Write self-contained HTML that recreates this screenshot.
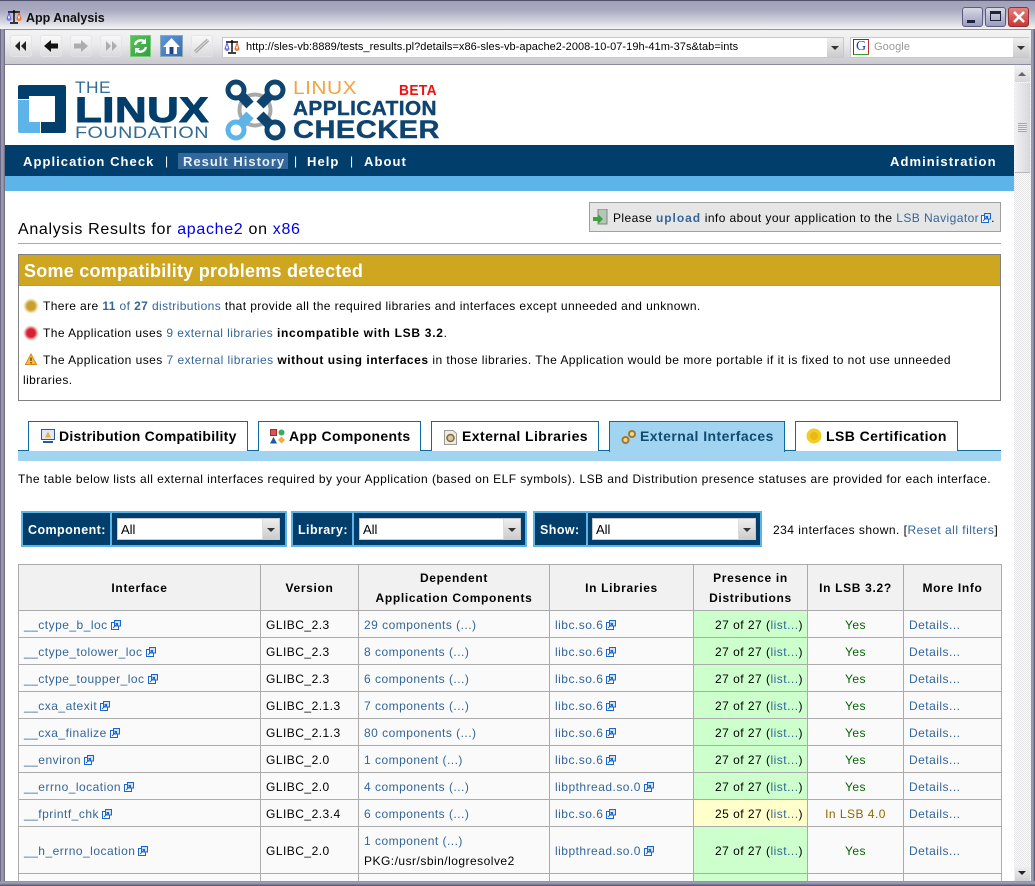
<!DOCTYPE html>
<html><head><meta charset="utf-8"><title>App Analysis</title>
<style>
html,body{margin:0;padding:0;width:1035px;height:886px;overflow:hidden;background:#fff}
body{position:relative;font:12px/16px "Liberation Sans",Arial,sans-serif;color:#000;letter-spacing:.42px}
.a{position:absolute;white-space:nowrap}
a,.l{color:#336699;text-decoration:none}
b{letter-spacing:.65px}
svg{display:block}
.ib{position:absolute;top:35px;width:22px;height:22px;border:1px solid #e4e4e8;border-radius:3px;background:linear-gradient(#fafafa,#dcdcdf);box-sizing:border-box}
.wb{position:absolute;top:7px;height:20px;border-radius:3px;border:1px solid #5c5c80;box-sizing:border-box;background:linear-gradient(#d8d8e4,#9c9cbc)}
.tab{position:absolute;top:421px;height:30px;box-sizing:border-box;border:1px solid #0f6a9f;border-bottom:none;background:#fff;font-weight:bold;font-size:14px;line-height:28px;white-space:nowrap}
.tab span{position:absolute;top:0}
.tab svg{position:absolute;top:7px}
.fb{position:absolute;top:511px;height:36px;box-sizing:border-box;border:2px solid #5cb4e8;background:#013e6b;color:#fff;font-weight:bold;font-size:12.5px;line-height:34px}
.fb .d{position:absolute;top:0;bottom:0;width:2px;background:#5cb4e8}
.sel{position:absolute;top:5px;height:22px;background:#fff;border:1px solid #c8c8cc;box-sizing:border-box;color:#000;font-weight:normal;font-size:13px;line-height:22px;padding-left:3px;letter-spacing:0}
.sel i{position:absolute;right:0;top:0;bottom:0;width:16px;background:linear-gradient(#eee,#ccc);border-left:1px solid #ddd}
.sel i:after{content:"";position:absolute;left:4px;top:9px;border:4px solid transparent;border-top:4px solid #333;border-bottom:0}
.nv{color:#fff;font-weight:bold;font-size:13px;letter-spacing:1.06px;top:154px}
table{position:absolute;left:18px;top:564px;border-collapse:collapse;table-layout:fixed;width:983px;letter-spacing:.48px}
td,th{border:1px solid #ababab;padding:2px 0 0 5px;height:25px;background:#fafafa;font-weight:normal;white-space:nowrap;overflow:hidden;line-height:20px;box-sizing:border-box}
tr{height:27px}
th{background:#f1f1f1;font-weight:bold;text-align:center;padding:0;height:46px;letter-spacing:.68px}
.g{background:#ccffcc}.y{background:#ffffcc}
.p{text-align:right;padding-right:4px}
.c{text-align:center;padding:2px 0 0;color:#006600}
.o{color:#8a6a00}
.x{display:inline-block;width:10px;height:10px;vertical-align:-1px;margin-left:3px}
</style></head><body>
<svg width="0" height="0" style="position:absolute"><defs>
<symbol id="ext" viewBox="0 0 10 10"><rect x=".5" y="2.5" width="7" height="7" fill="#fff" stroke="#1a66cc"/><rect x="3.5" y=".5" width="6" height="5.5" fill="#cfe2fa" stroke="#1a66cc"/><path d="M2 8L6.5 3.5M4.5 3.5H6.5V5.5" stroke="#1a66cc" fill="none"/></symbol>
<symbol id="scale" viewBox="0 0 16 16"><path d="M8 1V13M2 3H14M4 14H12" stroke="#000" stroke-width="1.4"/><path d="M3 4L1 10H5Z" fill="#fff" stroke="#5a5ad8"/><path d="M1 10A2 2 0 0 0 5 10Z" fill="#7a7af0"/><path d="M13 4L11 10H15Z" fill="#fff" stroke="#e06020"/><path d="M11 10A2 2 0 0 0 15 10Z" fill="#f08030"/></symbol>
</defs></svg>

<!-- window chrome -->
<div class="a" style="left:0;top:0;width:1035px;height:29px;background:linear-gradient(#a0a0ba 0,#a8a8c0 30%,#d0d0dc 70%,#f4f4f6 100%);border-top:1px solid #50506a;box-sizing:border-box"></div>
<svg class="a" style="left:6px;top:9px" width="16" height="16"><use href="#scale"/></svg>
<div class="a" style="left:26px;top:10px;font-size:12.5px;font-weight:bold;letter-spacing:0;color:#111">App Analysis</div>
<div class="wb" style="left:962px;width:21px"><div class="a" style="left:4px;top:12px;width:8px;height:3px;background:#1c2440"></div></div>
<div class="wb" style="left:985px;width:21px"><div class="a" style="left:4px;top:3px;width:11px;height:10px;border:1px solid #1c2440;border-top-width:3px;box-sizing:border-box"></div></div>
<div class="wb" style="left:1008px;width:21px;background:linear-gradient(#e88080,#c83838);border-color:#903030"><svg class="a" style="left:3px;top:2px" width="14" height="14"><path d="M2 2L12 12M12 2L2 12" stroke="#fff" stroke-width="2.6"/></svg></div>
<div class="a" style="left:0;top:29px;width:1035px;height:36px;background:linear-gradient(#f3f3f4,#ececee 40%,#c9c9ce);border-top:1px solid #9090a8;border-bottom:1px solid #8a8aa0;box-sizing:border-box"></div>

<div class="ib" style="left:10px"><svg width="20" height="20"><path d="M9 5L4 10L9 15ZM15 5L10 10L15 15Z" fill="#222"/></svg></div>
<div class="ib" style="left:40px"><svg width="20" height="20"><path d="M10 4L3 10L10 16V12.5H17V7.5H10Z" fill="#111"/></svg></div>
<div class="ib" style="left:70px;opacity:.75"><svg width="20" height="20"><path d="M10 4L17 10L10 16V12.5H3V7.5H10Z" fill="#999"/></svg></div>
<div class="ib" style="left:100px;opacity:.75"><svg width="20" height="20"><path d="M5 5L10 10L5 15ZM11 5L16 10L11 15Z" fill="#999"/></svg></div>
<div class="a" style="left:130px;top:35px;width:21px;height:22px;background:linear-gradient(135deg,#58c058,#30a040);border:1px solid #7c7;box-sizing:border-box"><svg width="19" height="20"><path d="M4 9A6 6 0 0 1 14 6M15 11A6 6 0 0 1 5 14" fill="none" stroke="#fff" stroke-width="2.4"/><path d="M15 2V8H10ZM4 18V12H9Z" fill="#fff"/></svg></div>
<div class="a" style="left:160px;top:35px;width:23px;height:22px;background:linear-gradient(135deg,#5e96d8,#3a6cb0);border:1px solid #8ab;box-sizing:border-box"><svg width="21" height="20"><path d="M10.500 2L19 11H16V18H5V11H2Z" fill="#fff"/><rect x="8.500" y="11" width="4" height="7" fill="#1c3f90"/></svg></div>
<div class="ib" style="left:191px;opacity:.8"><svg width="20" height="20"><path d="M3 16L16 4" stroke="#999" stroke-width="3.500"/><path d="M3 16L16 4" stroke="#ddd" stroke-width="1"/></svg></div>

<div class="a" style="left:222px;top:37px;width:622px;height:21px;background:#fff;border:1px solid #c8c8cc;box-sizing:border-box"></div>
<svg class="a" style="left:224px;top:39px" width="16" height="16"><use href="#scale"/></svg>
<div class="a" style="left:246px;top:40px;font-size:11px;line-height:15px;letter-spacing:.05px">http://sles-vb:8889/tests_results.pl?details=x86-sles-vb-apache2-2008-10-07-19h-41m-37s&amp;tab=ints</div>
<div class="a" style="left:827px;top:38px;width:16px;height:19px;background:linear-gradient(#eee,#ccc)"><div class="a" style="left:4px;top:8px;border:4px solid transparent;border-top-color:#333;border-bottom:0"></div></div>
<div class="a" style="left:850px;top:37px;width:179px;height:21px;background:#fff;border:1px solid #c8c8cc;box-sizing:border-box"></div>
<div class="a" style="left:853px;top:39px;width:14px;height:14px;border:1px solid;border-color:#1a3fc0 #c03030 #30a030 #1a3fc0;color:#1a3fc0;font:14px/14px 'Liberation Serif',serif;text-align:center;letter-spacing:0">G</div>
<div class="a" style="left:874px;top:40px;font-size:11px;line-height:15px;color:#999;letter-spacing:.1px">Google</div>
<div class="a" style="left:1013px;top:38px;width:16px;height:19px;background:linear-gradient(#eee,#ccc)"><div class="a" style="left:4px;top:8px;border:4px solid transparent;border-top-color:#333;border-bottom:0"></div></div>

<!-- logos -->
<svg class="a" style="left:5px;top:65px" width="450" height="80" viewBox="5 65 450 80">
<path d="M20 85H64a2 2 0 0 1 2 2V131a2 2 0 0 1-2 2H41V122H55V96H29V99H18V87a2 2 0 0 1 2-2Z" fill="#013e6b"/>
<path d="M18 100H29V122H40V133H20a2 2 0 0 1-2-2Z" fill="#5cb4e8"/>
<text x="75" y="93" font-family="Liberation Sans" font-size="17" fill="#336b94" textLength="36" lengthAdjust="spacingAndGlyphs">THE</text>
<text x="75" y="122" font-family="Liberation Sans" font-weight="bold" font-size="35" fill="#013e6b" stroke="#013e6b" stroke-width="1" textLength="134" lengthAdjust="spacingAndGlyphs">LINUX</text>
<text x="75" y="138" font-family="Liberation Sans" font-size="16.500" fill="#336b94" textLength="134" lengthAdjust="spacingAndGlyphs">FOUNDATION</text>
<circle cx="255" cy="110" r="15.500" fill="none" stroke="#a8a8a8" stroke-width="4"/>
<g fill="none">
<path d="M236 90L250 105" stroke="#0f4470" stroke-width="10"/><circle cx="236" cy="90" r="8" stroke="#0f4470" stroke-width="5" fill="#fff"/>
<path d="M275 90L260 105" stroke="#0f4470" stroke-width="10"/><circle cx="275" cy="90" r="8" stroke="#0f4470" stroke-width="5" fill="#fff"/>
<path d="M236 130L250 115" stroke="#5cb4e8" stroke-width="10"/><circle cx="236" cy="130" r="8" stroke="#5cb4e8" stroke-width="5" fill="#fff"/>
<path d="M275 130L260 115" stroke="#0f4470" stroke-width="10"/><circle cx="275" cy="130" r="8" stroke="#0f4470" stroke-width="5" fill="#fff"/>
</g>
<text x="293" y="94" font-family="Liberation Sans" font-size="18" fill="#f4a340" textLength="64" lengthAdjust="spacingAndGlyphs">LINUX</text>
<text x="399" y="95" font-family="Liberation Sans" font-weight="bold" font-size="15" fill="#ee1111" textLength="38" lengthAdjust="spacingAndGlyphs">BETA</text>
<text x="293" y="115" font-family="Liberation Sans" font-weight="bold" font-size="20" fill="#0f4470" stroke="#0f4470" stroke-width=".4" textLength="144" lengthAdjust="spacingAndGlyphs">APPLICATION</text>
<text x="293" y="138" font-family="Liberation Sans" font-weight="bold" font-size="25" fill="#0f4470" stroke="#0f4470" stroke-width=".4" textLength="147" lengthAdjust="spacingAndGlyphs">CHECKER</text>
</svg>

<!-- nav -->
<div class="a" style="left:5px;top:145px;width:1009px;height:31px;background:#013e6b"></div>
<div class="a" style="left:5px;top:176px;width:1009px;height:15px;background:#5cb4e8"></div>
<div class="a" style="left:178px;top:153px;width:110px;height:16px;background:#336699"></div>
<div class="a nv" style="left:23px">Application Check</div>
<div class="a" style="left:165px;top:153px;color:#fff">|</div>
<div class="a nv" style="left:183px;color:#e8eef4;letter-spacing:1px">Result History</div>
<div class="a" style="left:294px;top:153px;color:#fff">|</div>
<div class="a nv" style="left:307px">Help</div>
<div class="a" style="left:350px;top:153px;color:#fff">|</div>
<div class="a nv" style="left:364px">About</div>
<div class="a nv" style="left:890px">Administration</div>

<!-- upload box -->
<div class="a" style="left:589px;top:202px;width:412px;height:30px;background:#e6e6e6;border:1px solid #a0a0a0;box-sizing:border-box"></div>
<svg class="a" style="left:593px;top:209px" width="16" height="16"><rect x="5" y="0" width="9" height="15" fill="#b8c4b8" stroke="#7a8a7a"/><path d="M0 8H5V5L10 10L5 15V12H0Z" fill="#40a040"/></svg>
<div class="a" style="left:613px;top:210px">Please <b style="color:#336699;letter-spacing:.95px">upload</b> info about your application to the <a>LSB Navigator</a><svg class="x" style="margin-left:2px;display:inline-block"><use href="#ext"/></svg>.</div>

<!-- heading -->
<div class="a" style="left:18px;top:221px;font-size:16px;line-height:18px;letter-spacing:.68px">Analysis Results for <span style="color:#0000ee">apache2</span> on <span style="color:#0000ee">x86</span></div>
<div class="a" style="left:18px;top:243px;width:983px;height:1px;background:#aaa"></div>

<!-- alert -->
<div class="a" style="left:18px;top:254px;width:983px;height:147px;border:1px solid #808080;box-sizing:border-box"></div>
<div class="a" style="left:19px;top:255px;width:981px;height:30px;background:#cfa61f;border-bottom:1px solid #999"></div>
<div class="a" style="left:24px;top:261px;font-size:18px;line-height:21px;font-weight:bold;color:#fff;letter-spacing:.25px">Some compatibility problems detected</div>
<div class="a" style="left:23px;top:298px;width:16px;height:16px;background:radial-gradient(circle closest-side,#c9a02c 50%,#f3e9cc 85%,transparent 100%)"></div>
<div class="a" style="left:43px;top:298px;letter-spacing:.395px">There are <b class="l" style="letter-spacing:.4px">11</b> <a>of</a> <b class="l" style="letter-spacing:.4px">27</b> <a>distributions</a> that provide all the required libraries and interfaces except unneeded and unknown.</div>
<div class="a" style="left:23px;top:325px;width:16px;height:16px;background:radial-gradient(circle closest-side,#d82030 50%,#f6d4d4 85%,transparent 100%)"></div>
<div class="a" style="left:43px;top:325px;letter-spacing:.44px">The Application uses <a>9 external libraries</a> <b style="letter-spacing:.72px">incompatible with LSB 3.2</b>.</div>
<svg class="a" style="left:25px;top:353px" width="12" height="12"><path d="M6 1L11.500 11.500H.5Z" fill="#f8c040" stroke="#d08820"/><path d="M6 4.500V8M6 9V10.500" stroke="#503000" stroke-width="1.200"/></svg>
<div class="a" style="left:43px;top:352px;letter-spacing:.45px">The Application uses <a>7 external libraries</a> <b style="letter-spacing:.55px">without using interfaces</b> in those libraries. The Application would be more portable if it is fixed to not use unneeded</div>
<div class="a" style="left:23px;top:372px">libraries.</div>

<!-- tabs -->
<div class="a" style="left:18px;top:450px;width:983px;height:11px;background:#a0d4f0;border-top:1px solid #0f6a9f;box-sizing:border-box"></div>
<div class="tab" style="left:28px;width:220px;letter-spacing:.25px"><svg style="left:12px" width="14" height="14"><rect x="0.500" y="0.500" width="13" height="10" fill="#dfe8f4" stroke="#2a5a9a"/><rect x="2" y="12" width="10" height="2" fill="#2a5a9a"/><path d="M7 2.500L4 8.500H10Z" fill="#e8b040"/></svg><span style="left:30px">Distribution Compatibility</span></div>
<div class="tab" style="left:258px;width:163px;letter-spacing:.35px"><svg style="left:11px" width="15" height="15"><rect x="0.500" y="0.500" width="6" height="6" fill="#e05050" stroke="#a03030"/><circle cx="11.500" cy="3.500" r="3" fill="#40a860"/><path d="M3.500 8L7 14.500H0Z" fill="#1c5a9c"/><path d="M11.500 7.500L15 11L11.500 14.500L8 11Z" fill="#f0b030"/></svg><span style="left:30px">App Components</span></div>
<div class="tab" style="left:431px;width:168px;letter-spacing:.43px"><svg style="left:12px" width="13" height="16"><path d="M.5 1.500H9L12.500 4.500V15.500H.5Z" fill="#f0ece0" stroke="#999"/><circle cx="6.500" cy="9" r="3.500" fill="#d8c8a0" stroke="#806a40" stroke-width="1.500"/></svg><span style="left:30px">External Libraries</span></div>
<div class="tab" style="left:609px;width:176px;background:#a0d4f0;height:31px;color:#0f4a70;letter-spacing:.45px"><svg style="left:11px" width="16" height="16"><circle cx="4.500" cy="11" r="3" fill="#f0d890" stroke="#a07830" stroke-width="2"/><circle cx="11" cy="5" r="3" fill="#f0d890" stroke="#a07830" stroke-width="2"/></svg><span style="left:30px">External Interfaces</span></div>
<div class="tab" style="left:795px;width:163px;letter-spacing:.43px"><svg style="left:10px;top:6px" width="16" height="16"><circle cx="8" cy="8" r="7.500" fill="#f2cc20"/><circle cx="8" cy="8" r="4" fill="#e8b818"/></svg><span style="left:30px">LSB Certification</span></div>

<div class="a" style="left:18px;top:471px;letter-spacing:.45px">The table below lists all external interfaces required by your Application (based on ELF symbols). LSB and Distribution presence statuses are provided for each interface.</div>

<!-- filters -->
<div class="fb" style="left:21px;width:266px"><span class="a" style="left:5px;top:0">Component:</span><div class="d" style="left:87px"></div><div class="sel" style="left:94px;width:163px">All<i></i></div></div>
<div class="fb" style="left:291px;width:236px"><span class="a" style="left:5px;top:0">Library:</span><div class="d" style="left:59px"></div><div class="sel" style="left:66px;width:162px">All<i></i></div></div>
<div class="fb" style="left:533px;width:229px"><span class="a" style="left:5px;top:0">Show:</span><div class="d" style="left:51px"></div><div class="sel" style="left:57px;width:164px">All<i></i></div></div>
<div class="a" style="left:773px;top:522px;letter-spacing:.48px">234 interfaces shown. [<a>Reset all filters</a>]</div>

<!-- table -->
<table>
<colgroup><col style="width:242px"><col style="width:98px"><col style="width:191px"><col style="width:144px"><col style="width:114px"><col style="width:96px"><col style="width:98px"></colgroup>
<tr><th>Interface</th><th>Version</th><th>Dependent<br>Application Components</th><th>In Libraries</th><th>Presence in<br>Distributions</th><th>In LSB 3.2?</th><th>More Info</th></tr>
<tr><td><a>__ctype_b_loc</a><svg class="x"><use href="#ext"/></svg></td><td>GLIBC_2.3</td><td><a>29 components (...)</a></td><td><a>libc.so.6</a><svg class="x"><use href="#ext"/></svg></td><td class="g p">27 of 27 (<a>list...</a>)</td><td class="c">Yes</td><td><a>Details...</a></td></tr>
<tr><td><a>__ctype_tolower_loc</a><svg class="x"><use href="#ext"/></svg></td><td>GLIBC_2.3</td><td><a>8 components (...)</a></td><td><a>libc.so.6</a><svg class="x"><use href="#ext"/></svg></td><td class="g p">27 of 27 (<a>list...</a>)</td><td class="c">Yes</td><td><a>Details...</a></td></tr>
<tr><td><a>__ctype_toupper_loc</a><svg class="x"><use href="#ext"/></svg></td><td>GLIBC_2.3</td><td><a>6 components (...)</a></td><td><a>libc.so.6</a><svg class="x"><use href="#ext"/></svg></td><td class="g p">27 of 27 (<a>list...</a>)</td><td class="c">Yes</td><td><a>Details...</a></td></tr>
<tr><td><a>__cxa_atexit</a><svg class="x"><use href="#ext"/></svg></td><td>GLIBC_2.1.3</td><td><a>7 components (...)</a></td><td><a>libc.so.6</a><svg class="x"><use href="#ext"/></svg></td><td class="g p">27 of 27 (<a>list...</a>)</td><td class="c">Yes</td><td><a>Details...</a></td></tr>
<tr><td><a>__cxa_finalize</a><svg class="x"><use href="#ext"/></svg></td><td>GLIBC_2.1.3</td><td><a>80 components (...)</a></td><td><a>libc.so.6</a><svg class="x"><use href="#ext"/></svg></td><td class="g p">27 of 27 (<a>list...</a>)</td><td class="c">Yes</td><td><a>Details...</a></td></tr>
<tr><td><a>__environ</a><svg class="x"><use href="#ext"/></svg></td><td>GLIBC_2.0</td><td><a>1 component (...)</a></td><td><a>libc.so.6</a><svg class="x"><use href="#ext"/></svg></td><td class="g p">27 of 27 (<a>list...</a>)</td><td class="c">Yes</td><td><a>Details...</a></td></tr>
<tr><td><a>__errno_location</a><svg class="x"><use href="#ext"/></svg></td><td>GLIBC_2.0</td><td><a>4 components (...)</a></td><td><a>libpthread.so.0</a><svg class="x"><use href="#ext"/></svg></td><td class="g p">27 of 27 (<a>list...</a>)</td><td class="c">Yes</td><td><a>Details...</a></td></tr>
<tr><td><a>__fprintf_chk</a><svg class="x"><use href="#ext"/></svg></td><td>GLIBC_2.3.4</td><td><a>6 components (...)</a></td><td><a>libc.so.6</a><svg class="x"><use href="#ext"/></svg></td><td class="y p">25 of 27 (<a>list...</a>)</td><td class="c o">In LSB 4.0</td><td><a>Details...</a></td></tr>
<tr style="height:47px"><td><a>__h_errno_location</a><svg class="x"><use href="#ext"/></svg></td><td>GLIBC_2.0</td><td><a>1 component (...)</a><br>PKG:/usr/sbin/logresolve2</td><td><a>libpthread.so.0</a><svg class="x"><use href="#ext"/></svg></td><td class="g p">27 of 27 (<a>list...</a>)</td><td class="c">Yes</td><td><a>Details...</a></td></tr>
<tr><td></td><td></td><td></td><td></td><td class="g"></td><td></td><td></td></tr>
</table>

<!-- scrollbar -->
<div class="a" style="left:1014px;top:65px;width:17px;height:816px;background:repeating-conic-gradient(#e6e6e8 0 25%,#fafafa 0 50%) 0 0/2px 2px"></div>
<div class="a" style="left:1015px;top:66px;width:15px;height:16px;background:linear-gradient(#f2f2f4,#d8d8dc)"><div class="a" style="left:3px;top:6px;border:4px solid transparent;border-bottom-color:#666;border-top:0"></div></div>
<div class="a" style="left:1015px;top:83px;width:15px;height:90px;background:linear-gradient(90deg,#f0f0f2,#d8d8dc);border-bottom:1px solid #b8b8bc;box-sizing:border-box"></div>
<div class="a" style="left:1018px;top:123px;width:9px;height:9px;background:repeating-linear-gradient(#a8a8b0 0 1px,#e8e8ea 1px 2px)"></div>
<div class="a" style="left:1015px;top:865px;width:15px;height:16px;background:linear-gradient(#f2f2f4,#d0d0d4)"><div class="a" style="left:3px;top:6px;border:4px solid transparent;border-top-color:#222;border-bottom:0"></div></div>

<!-- window borders -->
<div class="a" style="left:0;top:29px;width:5px;height:857px;background:linear-gradient(90deg,#50506a,#a0a0b8 30%,#9090a8 70%,#606078)"></div>
<div class="a" style="left:1031px;top:29px;width:4px;height:857px;background:linear-gradient(90deg,#9090a8,#a0a0b8 40%,#50506a)"></div>
<div class="a" style="left:0;top:881px;width:1035px;height:5px;background:linear-gradient(#9090a8,#a0a0b8 40%,#50506a)"></div>
</body></html>
